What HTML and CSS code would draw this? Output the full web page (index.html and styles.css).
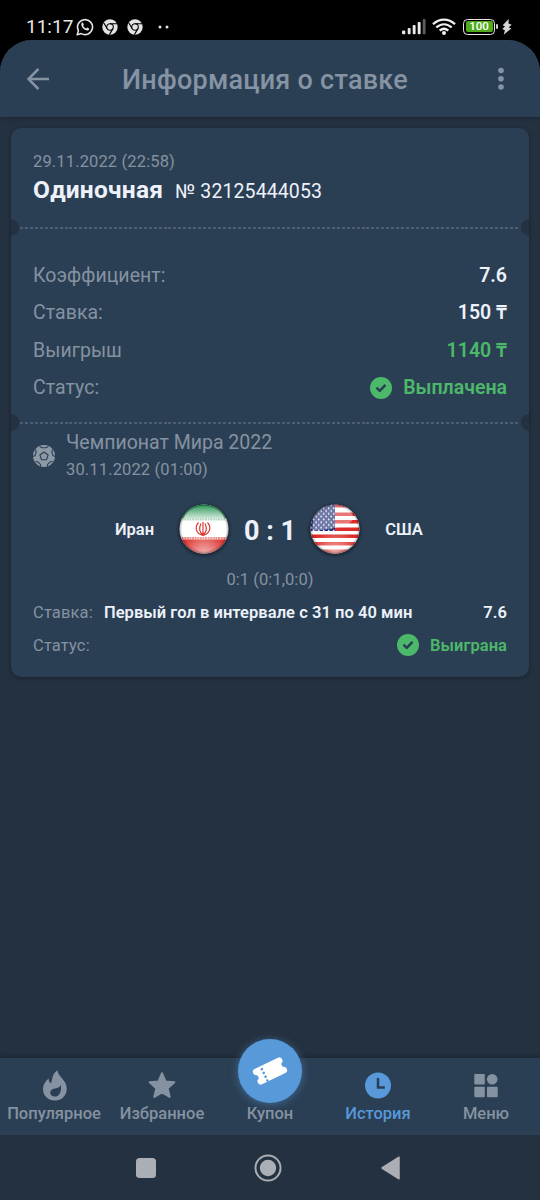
FILE: index.html
```html
<!DOCTYPE html>
<html lang="ru">
<head>
<meta charset="utf-8">
<title>Информация о ставке</title>
<link rel="stylesheet" href="styles.css">
</head>
<body>
<div class="screen">
  <div class="statusbar">
    <span class="clock">11:17</span>
    <svg class="s-wa" width="18" height="18" viewBox="0 0 18 18"><path d="M1.200 16.800l1.200-4.200A7.500 7.500 0 1 1 5.300 15.600z" fill="none" stroke="#e4e4e4" stroke-width="1.600" stroke-linejoin="round"/><path d="M5.400 5.600c.5-1.300 1.500-1.300 1.900-.4l.5 1.200c.1.400-.7 1-.6 1.300.6 1.300 1.700 2.200 2.900 2.700.4.100.9-.9 1.300-.8l1.500.8c.6.400 0 2-1.500 2.200C8.400 12.800 4.600 8.800 5.400 5.600z" fill="#e4e4e4"/></svg>
    <svg class="s-chrome" width="16" height="16" viewBox="0 0 16 16"><circle cx="8" cy="8" r="7.700" fill="#e4e4e4"/><g fill="none" stroke="#000" stroke-width="1.100"><circle cx="8" cy="8" r="3.300"/><path d="M8 4.700h7M5.100 9.600L1.700 3.700M10.900 9.600L7.400 15.600"/></g></svg>
    <svg class="s-chrome" width="16" height="16" viewBox="0 0 16 16"><circle cx="8" cy="8" r="7.700" fill="#e4e4e4"/><g fill="none" stroke="#000" stroke-width="1.100"><circle cx="8" cy="8" r="3.300"/><path d="M8 4.700h7M5.100 9.600L1.700 3.700M10.900 9.600L7.400 15.600"/></g></svg>
    <svg class="s-dots" width="12" height="4" viewBox="0 0 12 4"><circle cx="2" cy="2" r="1.500" fill="#e4e4e4"/><circle cx="9" cy="2" r="1.500" fill="#e4e4e4"/></svg>
    <svg class="s-signal" width="24" height="16" viewBox="0 0 24 16"><g fill="#e8e8e8"><rect x="0" y="11.500" width="3.300" height="3.800" rx="1"/><rect x="5.700" y="9" width="2.900" height="6.300" rx="1"/><rect x="10.700" y="6" width="2.900" height="9.300" rx="1"/><rect x="15.700" y="3" width="2.900" height="12.300" rx="1"/></g><rect x="20.700" y="0" width="2.900" height="15.300" rx="1" fill="#5c5c5c"/></svg>
    <svg class="s-wifi" width="24" height="18" viewBox="0 0 24 18"><g fill="none" stroke="#f0f0f0" stroke-width="2.300"><path d="M1 6.200C7.500 .1 16.500 .1 23 6.200"/><path d="M4.300 9.500C9 5.200 15 5.200 19.700 9.500"/><path d="M7.700 12.600C10.300 10.300 13.700 10.300 16.300 12.600"/></g><circle cx="12" cy="15" r="2" fill="#f0f0f0"/></svg>
    <span class="battery"><span class="battery-fill">100</span></span>
    <span class="battery-tip"></span>
    <svg class="s-bolt" width="10" height="16" viewBox="0 0 10 16"><path d="M6.700 0L.7 6.200l2.300 1.300L.2 9.900l2.700 1.300L1.700 15.700l7.600-6.300-2.600-1.200L9.700 5.700 6.500 4.500z" fill="#d6d6d6"/></svg>
  </div>

  <div class="app">
    <header class="header">
      <svg class="back" width="22" height="22" viewBox="0 0 22 22"><path d="M22 11H1.800M11.400 1L1.400 11l10 10" fill="none" stroke="#8693a3" stroke-width="2.500"/></svg>
      <h1 class="title">Информация о ставке</h1>
      <svg class="more" width="6" height="24" viewBox="0 0 6 24"><g fill="#8693a3"><circle cx="3" cy="3.500" r="2.800"/><circle cx="3" cy="11.800" r="2.800"/><circle cx="3" cy="20" r="2.800"/></g></svg>
    </header>

    <main class="content">
      <section class="card">
        <div class="coupon-head">
          <div class="date">29.11.2022 (22:58)</div>
          <div class="coupon-name"><b>Одиночная</b><span>№ 32125444053</span></div>
        </div>
        <div class="tear"></div>
        <div class="summary">
          <div class="row"><span>Коэффициент:</span><b>7.6</b></div>
          <div class="row"><span>Ставка:</span><b>150 ₸</b></div>
          <div class="row"><span>Выигрыш</span><b class="green">1140 ₸</b></div>
          <div class="row"><span>Статус:</span><span class="state">
            <svg width="22" height="22" viewBox="0 0 22 22"><circle cx="11" cy="11" r="11" fill="#4bb969"/><path d="M6.500 10.700l3.200 3.100 5.800-6" fill="none" stroke="#2b3f54" stroke-width="2.500" stroke-linejoin="round"/></svg><b class="green">Выплачена</b></span></div>
        </div>
        <div class="tear"></div>
        <div class="event">
          <svg class="ball" width="22" height="22" viewBox="0 0 22 22"><circle cx="11" cy="11" r="11" fill="#8e99a6"/><g fill="none" stroke="#2b3f54" stroke-width="1.100"><path d="M11 7l4.100 3-1.600 4.700h-5L6.900 10z"/><path d="M6.600 1.500L9 2.700h4l2.400-1.200M19.500 4.500l-.7 2.800 1.200 3.200 2 .9M19.700 16.500l-2.700.5-2.400 2.400-.2 2.200M2.300 16.500l2.700.5 2.400 2.400.2 2.200M2.500 4.500l.7 2.800L2 10.500l-2 .9"/></g></svg>
          <div>
            <div class="league">Чемпионат Мира 2022</div>
            <div class="kickoff">30.11.2022 (01:00)</div>
          </div>
        </div>
        <div class="match">
          <b class="team">Иран</b>
          <svg class="flag" width="50" height="50" viewBox="0 0 50 50">
            <defs>
              <clipPath id="disc"><circle cx="25" cy="25" r="24.500"/></clipPath>
              <linearGradient id="gloss" x1="0" y1="0" x2="0" y2="1"><stop offset="0" stop-color="#fff" stop-opacity=".15"/><stop offset="1" stop-color="#fff" stop-opacity=".8"/></linearGradient>
              <radialGradient id="glow" cx=".5" cy="1" r=".5"><stop offset="0" stop-color="#fff" stop-opacity=".65"/><stop offset="1" stop-color="#fff" stop-opacity="0"/></radialGradient>
              <radialGradient id="rim" cx=".5" cy=".5" r=".5"><stop offset=".88" stop-color="#000" stop-opacity="0"/><stop offset="1" stop-color="#000" stop-opacity=".35"/></radialGradient>
            </defs>
            <g clip-path="url(#disc)">
              <rect width="50" height="50" fill="#fff"/>
              <rect width="50" height="14" fill="#118a43"/>
              <path d="M4 14.500C8 5 16 1.500 25 1.500S42 5 46 14.500z" fill="url(#gloss)"/>
              <path d="M0 15.300h50" stroke="#b9d9c6" stroke-width="2.600" stroke-dasharray="2 .6"/>
              <path d="M0 34.200h50" stroke="#e5827d" stroke-width="2.600" stroke-dasharray="2 .6"/>
              <rect y="35.500" width="50" height="15" fill="#db2b27"/>
              <rect width="50" height="50" fill="url(#glow)"/>
              <g fill="none" stroke="#d83a35" stroke-width="1.200"><path d="M24 18v14M19.500 18.500C15.500 23 16.500 29.500 24 31.500M28.500 18.500C32.500 23 31.500 29.500 24 31.500M22 19.500c-2 4-1.800 8.500 2 11.500M26 19.500c2 4 1.800 8.500-2 11.500"/></g>
              <circle cx="25" cy="25" r="25" fill="url(#rim)"/>
            </g>
          </svg>
          <b class="score">0 : 1</b>
          <svg class="flag" width="50" height="50" viewBox="0 0 50 50">
            <defs><pattern id="stars" width="5" height="5.600" patternUnits="userSpaceOnUse"><circle cx="1.200" cy="1.400" r=".85" fill="#fff"/><circle cx="3.700" cy="4.200" r=".85" fill="#fff"/></pattern></defs>
            <g clip-path="url(#disc)">
              <rect width="50" height="50" fill="#fff"/>
              <g fill="#dc2b28"><rect width="50" height="3.500"/><rect y="8.500" width="50" height="3.500"/><rect y="16" width="50" height="3.500"/><rect y="23.500" width="50" height="3.500"/><rect y="30.500" width="50" height="3.500"/><rect y="38" width="50" height="3.500"/><rect y="45.500" width="50" height="4.500"/></g>
              <rect width="25" height="27" fill="#1d2c78"/><rect width="25" height="27" fill="url(#stars)"/>
              <path d="M3 13C8 3 17 1 25 1s16 3 18 11c1 9-13 12-41 15z" fill="#fff" opacity=".36"/>
              <rect width="50" height="50" fill="url(#glow)"/>
              <circle cx="25" cy="25" r="25" fill="url(#rim)"/>
            </g>
          </svg>
          <b class="team">США</b>
        </div>
        <div class="periods">0:1 (0:1,0:0)</div>
        <div class="bet">
          <div class="bet-row"><span>Ставка:</span><b class="pick">Первый гол в интервале с 31 по 40 мин</b><b class="odd">7.6</b></div>
          <div class="bet-row"><span>Статус:</span><span class="state">
            <svg width="22" height="22" viewBox="0 0 22 22"><circle cx="11" cy="11" r="11" fill="#4bb969"/><path d="M6.500 10.700l3.200 3.100 5.800-6" fill="none" stroke="#2b3f54" stroke-width="2.500" stroke-linejoin="round"/></svg><b class="green">Выиграна</b></span></div>
        </div>
      </section>
    </main>

    <nav class="tabs">
      <div class="tab"><svg class="flame" width="24" height="31" viewBox="0 0 24 31"><path fill-rule="evenodd" d="M14.600.2c0 6.500 9.200 9.500 9.200 18.500 0 7-5.200 11.800-11.900 11.800S0 25.700 0 19.200c0-4.600 2.200-7.600 5.600-10.700.1 2.400.9 4.100 2.400 4.900C9.500 9.300 8.800 3.800 14.600.2zM17.800 14.700c-1 3-3.400 3.200-5.900 3.700-3 .6-4.700 2-4.700 4.200 0 2.400 2 4 4.700 4 4.300 0 6.900-4.700 5.900-11.900z"/></svg><span>Популярное</span></div>
      <div class="tab"><svg width="28" height="31" viewBox="0 0 28 31"><path d="M14 3.200l3.500 8.200 8.900.8-6.700 6 2 8.700-7.700-4.600-7.700 4.600 2-8.700-6.700-6 8.900-.8z" stroke="#8592a1" stroke-width="2" stroke-linejoin="round"/></svg><span>Избранное</span></div>
      <div class="tab"><span class="fab"><svg width="36" height="34" viewBox="0 0 36 34"><g transform="translate(18 17) rotate(-26)"><path d="M-13-8.500h26q3 0 3 3v1q0 1.400-1.300 1.900a2.800 2.800 0 0 0 0 5.200q1.300.5 1.300 1.900v1q0 3-3 3h-26q-3 0-3-3v-1q0-1.400 1.300-1.900a2.800 2.800 0 0 0 0-5.200q-1.300-.5-1.300-1.900v-1q0-3 3-3z" fill="#fff"/><g fill="#5899da"><circle cx="-6.500" cy="-5.200" r="1.300"/><circle cx="-6.500" cy="-1" r="1.300"/><circle cx="-6.500" cy="3.200" r="1.300"/><circle cx="-6.500" cy="7.400" r="1.300"/></g></g></svg></span><span>Купон</span></div>
      <div class="tab active"><svg width="26" height="31" viewBox="0 0 26 31"><circle cx="13" cy="15.500" r="13"/><path d="M13 8v9.500h6.800" fill="none" stroke="#2b3f54" stroke-width="2.500"/></svg><span>История</span></div>
      <div class="tab"><svg width="24" height="31" viewBox="0 0 24 31"><rect x=".3" y="4" width="10.500" height="10.500" rx="1"/><circle cx="18.200" cy="9.300" r="5.300"/><rect x=".3" y="16.700" width="10.500" height="10.500" rx="1"/><rect x="13" y="16.700" width="10.700" height="10.500" rx="1"/></svg><span>Меню</span></div>
    </nav>
  </div>

  <div class="sysnav">
    <svg width="20" height="20" viewBox="0 0 20 20"><rect width="20" height="20" rx="3.500" fill="#abaeb4"/></svg>
    <svg class="home" width="28" height="28" viewBox="0 0 28 28"><circle cx="14" cy="14" r="12.500" fill="none" stroke="#abaeb4" stroke-width="2"/><circle cx="14" cy="14" r="8.200" fill="#abaeb4"/></svg>
    <svg class="prev" width="19" height="24" viewBox="0 0 19 24"><path d="M1 12L18 1.200v21.600z" fill="#abaeb4" stroke="#abaeb4" stroke-width="1.500" stroke-linejoin="round"/></svg>
  </div>
</div>
</body>
</html>
```
FILE: styles.css
```css
* { box-sizing: border-box; }
body { margin: 0; background: #000; font-family: Roboto, "Noto Sans", sans-serif; }
svg { display: block; flex: none; }
.screen { width: 540px; height: 1200px; display: flex; flex-direction: column; overflow: hidden; background: #000; }

.statusbar { height: 40px; flex: none; display: flex; align-items: center; padding: 13px 28px 0 26px; color: #e8e8e8; }
.clock { width: 50px; font-size: 19px; line-height: 24px; font-weight: 450; white-space: nowrap; }
.s-wa { margin-right: 8px; }
.s-chrome { margin-right: 9px; }
.s-dots { margin-left: 6px; }
.s-signal { margin-left: auto; margin-right: 6px; }
.s-wifi { margin-right: 7px; }
.battery { width: 32px; height: 16px; border: 1.500px solid #e8e8e8; border-radius: 4.500px; padding: 1.500px; display: flex; }
.battery-fill { flex: 1; background: #4fab1b; border-radius: 2px; color: #fff; font-size: 11.500px; line-height: 11.500px; font-weight: 500; text-align: center; }
.battery-tip { width: 2px; height: 5px; margin-left: 1px; margin-right: 4px; background: #d0d0d0; border-radius: 1px; }

.app { height: 1095px; flex: none; display: flex; flex-direction: column; background: #243140; border-radius: 32px 32px 0 0; overflow: hidden; }
.header { height: 77px; flex: none; display: flex; align-items: center; padding: 0 36px 0 27px; background: #2b3f54; box-shadow: 0 1px 5px rgba(0,0,0,.25); }
.title { margin: 3px 0 0 73px; font-size: 27px; line-height: 32px; font-weight: 500; letter-spacing: .25px; color: #8693a3; }
.more { margin-left: auto; }

.content { flex: 1; padding: 11px 11px 0; }
.card { height: 549px; display: flex; flex-direction: column; background: #2b3f54; border-radius: 10px; box-shadow: 0 1px 4px rgba(0,0,0,.35); color: #edf2fa; }
.date, .kickoff, .periods { font-size: 16.500px; line-height: 20px; letter-spacing: .14px; color: #8592a1; }
.coupon-head { height: 91px; padding: 24px 22px 0; }
.coupon-name { display: flex; align-items: baseline; gap: 12px; line-height: 28px; padding-top: 4px; }
.coupon-name b { font-size: 24.500px; letter-spacing: .25px; }
.coupon-name span { font-size: 19.500px; letter-spacing: .1px; }

.tear { height: 17px; flex: none; position: relative; display: flex; align-items: center; padding: 0 9px; overflow: hidden; }
.tear::after { content: ""; flex: 1; height: 2px; background: repeating-linear-gradient(90deg, #4c5d70 0 3px, transparent 3px 4.950px); }
.tear::before { content: ""; position: absolute; inset: 0; background: radial-gradient(circle at 0 50%, #243140 7.800px, transparent 8.600px), radial-gradient(circle at 100% 50%, #243140 7.800px, transparent 8.600px); }

.summary { height: 178px; padding: 21px 22px 0; }
.row { height: 37.500px; display: flex; align-items: center; justify-content: space-between; font-size: 19.500px; line-height: 24px; }
.row > span:first-child { color: #8592a1; letter-spacing: .05px; }
.row b { font-weight: 600; }
.green, .row .green { color: #4bb969; }
.state { display: flex; align-items: center; gap: 11px; }
.state svg { margin-top: -1px; }

.event { height: 70px; display: flex; gap: 11px; padding: 0 22px; }
.ball { margin-top: 14px; }
.league { font-size: 19.500px; line-height: 24px; color: #8592a1; }
.kickoff { margin-top: 5px; }

.match { height: 62px; display: grid; grid-template-columns: 82px 50px 81px 50px 82px; justify-content: center; align-items: center; margin-top: -3px; }
.team { font-size: 16.500px; font-weight: 600; text-align: center; padding-top: 1px; }
.team:first-child { padding-right: 8px; }
.team:last-child { padding-left: 5px; }
.flag { border-radius: 50%; box-shadow: 0 1px 3px 1px rgba(0,0,0,.4); margin-left: -.5px; }
.score { font-size: 27px; font-weight: 700; text-align: center; padding-top: 4px; }
.periods { text-align: center; margin-top: 10px; letter-spacing: .05px; }
.bet { padding: 6px 22px 0; }
.bet-row { height: 33px; display: flex; align-items: center; font-size: 16.500px; line-height: 20px; }
.bet-row > span:first-child { color: #8592a1; letter-spacing: .15px; }
.bet-row b { font-weight: 600; letter-spacing: .04px; }
.bet-row .state { margin-left: auto; }
.pick { margin-left: 11px; white-space: nowrap; }
.odd { margin-left: auto; }

.tabs { height: 77px; flex: none; display: grid; grid-template-columns: repeat(5, 108px); background: #2b3f54; box-shadow: 0 -1px 5px rgba(0,0,0,.3); }
.tab { position: relative; display: flex; flex-direction: column; align-items: center; justify-content: flex-end; padding-bottom: 11px; color: #8592a1; fill: #8592a1; font-size: 16.500px; line-height: 20px; font-weight: 500; }
.tab > svg { margin-bottom: 3px; }
.tab > .flame { margin-left: 2px; }
.tab.active { color: #5899da; fill: #5899da; }
.fab { position: absolute; top: -19px; left: 22px; width: 64px; height: 64px; border-radius: 50%; background: #5899da; display: flex; align-items: center; justify-content: center; box-shadow: 0 1px 8px rgba(88,153,218,.5); }

.sysnav { flex: 1; display: flex; align-items: center; padding-left: 136px; background: #243140; }
.home { margin-left: 98px; }
.prev { margin-left: 99px; }
```
